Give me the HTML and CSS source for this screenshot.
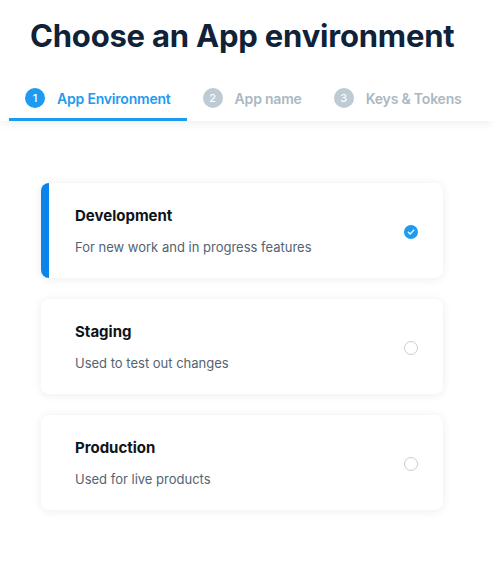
FILE: index.html
```html
<!DOCTYPE html>
<html>
<head>
<meta charset="utf-8">
<link rel="stylesheet" href="styles.css">
</head>
<body>
<header class="header">
  <h1 class="title">Choose an App environment</h1>
  <nav class="tabs">
    <div class="tab active"><span class="num">1</span><span class="label">App Environment</span></div>
    <div class="tab"><span class="num">2</span><span class="label">App name</span></div>
    <div class="tab"><span class="num">3</span><span class="label">Keys &amp; Tokens</span></div>
  </nav>
</header>
<main class="cards">
  <div class="card selected">
    <div class="text">
      <div class="name">Development</div>
      <div class="desc">For new work and in progress features</div>
    </div>
    <span class="radio checked"><svg viewBox="0 0 14 14" width="14" height="14"><path d="M4.3 7.2 L6.2 9 L9.8 5.1" fill="none" stroke="#fff" stroke-width="1.4" stroke-linecap="round" stroke-linejoin="round"/></svg></span>
  </div>
  <div class="card">
    <div class="text">
      <div class="name">Staging</div>
      <div class="desc">Used to test out changes</div>
    </div>
    <span class="radio"></span>
  </div>
  <div class="card">
    <div class="text">
      <div class="name">Production</div>
      <div class="desc">Used for live products</div>
    </div>
    <span class="radio"></span>
  </div>
</main>
</body>
</html>
```
FILE: styles.css
```css
* { box-sizing: border-box; }
html, body { margin: 0; padding: 0; background: #fff; }
body {
  font-family: Inter, "Noto Sans", sans-serif;
  width: 493px;
  overflow: hidden;
}
.header {
  background: #fff;
  box-shadow: 0 2px 10px rgba(15, 20, 25, 0.07);
  position: relative;
  z-index: 1;
}
.title {
  margin: 0;
  padding: 16px 0 0 30px;
  font-size: 31px;
  line-height: 40px;
  font-weight: 700;
  color: #0f2237;
  letter-spacing: -0.2px;
  white-space: nowrap;
}
.tabs {
  display: flex;
  padding-left: 9px;
  margin-top: 22px;
}
.tab {
  display: flex;
  align-items: center;
  padding: 0 16px;
  height: 43px;
  border-bottom: 3px solid transparent;
  color: #aab8c2;
  font-size: 14px;
  font-weight: 600;
  letter-spacing: -0.2px;
  white-space: nowrap;
}
.tab.active {
  color: #1d9bf0;
  border-bottom-color: #1d9bf0;
}
.num {
  width: 20px;
  height: 20px;
  border-radius: 50%;
  background: #bccbd4;
  color: #fff;
  font-size: 11px;
  font-weight: 500;
  letter-spacing: 0;
  display: flex;
  align-items: center;
  justify-content: center;
  margin-right: 12px;
  flex: none;
}
.tab.active .num { background: #1d9bf0; }
.cards {
  background: #fff;
  padding: 62px 0 40px 41px;
  display: flex;
  flex-direction: column;
  gap: 21px;
}
.card {
  width: 402px;
  height: 95px;
  background: #fff;
  border-radius: 8px;
  box-shadow: 0 1px 10px rgba(15, 20, 25, 0.08);
  display: flex;
  align-items: center;
  padding: 2px 24px 0 34px;
  overflow: hidden;
}
.card.selected {
  border-left: 8px solid #0a84ed;
  padding-left: 26px;
}
.text { flex: 1; }
.name {
  font-size: 15px;
  font-weight: 700;
  color: #0f1419;
  line-height: 20px;
}
.desc {
  margin-top: 11px;
  font-size: 13px;
  color: #536471;
  line-height: 20px;
}
.radio {
  width: 14px;
  height: 14px;
  border-radius: 50%;
  border: 1px solid #c4cfd6;
  flex: none;
  display: flex;
  margin-top: 0;
  margin-right: 1px;
}
.radio.checked {
  border: none;
  background: #1d9bf0;
  margin-top: 0;
  margin-right: 1px;
}
```
